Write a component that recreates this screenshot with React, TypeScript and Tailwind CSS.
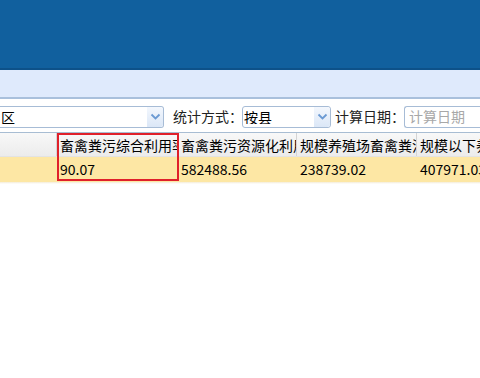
import React from 'react';

const font = { fontFamily: '"Microsoft YaHei", "Noto Sans CJK SC", "Noto Sans", sans-serif' };

const columns = [
  { title: '', width: 'w-[57px]' },
  { title: '畜禽粪污综合利用率', width: 'w-[121px]' },
  { title: '畜禽粪污资源化利用量', width: 'w-[119px]' },
  { title: '规模养殖场畜禽粪污产生量', width: 'w-[120px]' },
  { title: '规模以下养殖场畜禽粪污', width: 'w-[120px]' },
];

const row = ['', '90.07', '582488.56', '238739.02', '407971.03'];

function Chevron() {
  return (
    <svg width="11" height="7" viewBox="0 0 11 7" fill="none">
      <path d="M1.5 1.5 L5.5 5.5 L9.5 1.5" stroke="#6b9ad3" strokeWidth="1.8" />
    </svg>
  );
}

function Select({ value, className, noLeft }: { value: string; className: string; noLeft?: boolean }) {
  return (
    <div
      className={`flex h-[22px] items-center rounded-[3px] border border-[#a7bcd6] bg-white ${noLeft ? 'rounded-l-none border-l-0' : ''} ${className}`}
    >
      <span className="flex-1 truncate pl-[1px] text-[14px] leading-none text-black">{value}</span>
      <div className="flex h-full w-[16px] items-center justify-center rounded-r-[3px] bg-gradient-to-b from-[#f3f7fd] to-[#dbe7f7]">
        <Chevron />
      </div>
    </div>
  );
}

export default function App() {
  return (
    <div className="h-[378px] w-[480px] overflow-hidden bg-white" style={font}>
      <div className="h-[68px] bg-[#11609e]" />
      <div className="h-[2px] bg-[#0d5189]" />
      <div className="h-[29px] border-b-2 border-[#a9c0dc] bg-[#dfeafc]" />
      <div className="flex h-[33px] items-center pt-[2px]">
        <Select value="区" className="w-[164px]" noLeft />
        <span className="ml-[9px] whitespace-nowrap text-[14px] text-[#222]">统计方式：</span>
        <Select value="按县" className="ml-[-1px] w-[89px]" />
        <span className="ml-[4px] whitespace-nowrap text-[14px] text-[#222]">计算日期：</span>
        <div className="ml-[-1px] flex h-[22px] flex-1 items-center rounded-l-[3px] border border-r-0 border-[#a7bcd6] bg-white pl-[4px]">
          <span className="whitespace-nowrap text-[14px] text-[#a8a8a8]">计算日期</span>
        </div>
      </div>
      <div className="relative border-t border-[#a8bdd3]">
        <div className="flex h-[24px] border-b border-[#e3e3e3] bg-gradient-to-b from-[#f8f8f8] to-[#ececec]">
          {columns.map((c, i) => (
            <div
              key={i}
              className={`${c.width} shrink-0 overflow-hidden whitespace-nowrap border-r border-[#d4d4d4] pl-[3px] text-[14px] leading-[24px] text-black`}
            >
              {c.title}
            </div>
          ))}
        </div>
        <div className="flex h-[25px] bg-[#fde7a4]">
          {row.map((v, i) => (
            <div
              key={i}
              className={`${columns[i].width} shrink-0 overflow-hidden whitespace-nowrap pl-[3px] text-[14px] leading-[25px] text-black`}
            >
              {v}
            </div>
          ))}
        </div>
        <div className="h-[2px] bg-gradient-to-b from-[#f4ecd6] to-white" />
        <div className="pointer-events-none absolute left-[57px] top-0 h-[48px] w-[122px] border-2 border-[#e0202a]" />
      </div>
    </div>
  );
}
